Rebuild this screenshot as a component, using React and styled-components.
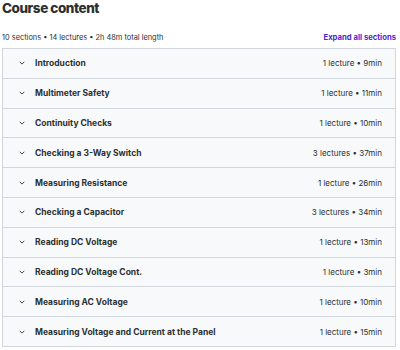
import React from "react";
import styled, { createGlobalStyle } from "styled-components";

const Global = createGlobalStyle`
  html, body { margin: 0; padding: 0; background: #fff; }
  body { font-family: Inter, "Noto Sans", sans-serif; color: #2d2f31; }
`;

const Page = styled.div`
  padding: 0 4px 0 2px;
  width: 394px;
`;

const Title = styled.h2`
  margin: 0;
  height: 18px;
  font-size: 13.5px;
  font-weight: 800;
  line-height: 17px;
  letter-spacing: -0.45px;
`;

const Meta = styled.div`
  display: flex;
  justify-content: space-between;
  align-items: center;
  margin-top: 13px;
  height: 12px;
`;

const Summary = styled.span`
  font-size: 7.4px;
  color: #2d2f31;
`;

const Expand = styled.button`
  border: 0;
  background: none;
  padding: 0;
  font-family: inherit;
  font-size: 7.7px;
  font-weight: 700;
  color: #5624d0;
  cursor: pointer;
`;

const List = styled.div`
  margin-top: 5px;
  border: 1px solid #d1d7dc;
  border-bottom: 0;
`;

const Row = styled.div`
  display: flex;
  align-items: center;
  height: 28.8px;
  padding: 0 13px 0 15px;
  background: #f7f9fa;
  border-bottom: 1px solid #d1d7dc;
`;

const Chevron = styled.svg`
  width: 8px;
  height: 8px;
  flex: none;
  margin-right: 9px;
`;

const SectionTitle = styled.span`
  flex: 1;
  font-size: 8.5px;
  font-weight: 700;
  color: #2d2f31;
`;

const SectionMeta = styled.span`
  font-size: 8px;
  color: #2d2f31;
`;

const sections = [
  ["Introduction", "1 lecture • 9min"],
  ["Multimeter Safety", "1 lecture • 11min"],
  ["Continuity Checks", "1 lecture • 10min"],
  ["Checking a 3-Way Switch", "3 lectures • 37min"],
  ["Measuring Resistance", "1 lecture • 26min"],
  ["Checking a Capacitor", "3 lectures • 34min"],
  ["Reading DC Voltage", "1 lecture • 13min"],
  ["Reading DC Voltage Cont.", "1 lecture • 3min"],
  ["Measuring AC Voltage", "1 lecture • 10min"],
  ["Measuring Voltage and Current at the Panel", "1 lecture • 15min"],
];

export default function App() {
  return (
    <Page>
      <Global />
      <Title>Course content</Title>
      <Meta>
        <Summary>10 sections • 14 lectures • 2h 48m total length</Summary>
        <Expand>Expand all sections</Expand>
      </Meta>
      <List>
        {sections.map(([t, m]) => (
          <Row key={t}>
            <Chevron viewBox="0 0 8 8">
              <path d="M2 3.1 L4 5.1 L6 3.1" fill="none" stroke="#2d2f31" strokeWidth="0.9" strokeLinecap="round" strokeLinejoin="round" />
            </Chevron>
            <SectionTitle>{t}</SectionTitle>
            <SectionMeta>{m}</SectionMeta>
          </Row>
        ))}
      </List>
    </Page>
  );
}
